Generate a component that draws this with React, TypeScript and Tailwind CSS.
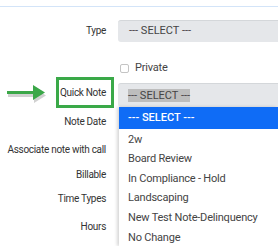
const options = [
  '--- SELECT ---',
  '2w',
  'Board Review',
  'In Compliance - Hold',
  'Landscaping',
  'New Test Note-Delinquency',
  'No Change',
]

function Label({ text, className = '' }: { text: string; className?: string }) {
  return (
    <div
      className={`w-[106px] shrink-0 whitespace-nowrap text-right text-[10px] leading-[14px] tracking-[-0.3px] text-[#333] ${className}`}
    >
      {text}
    </div>
  )
}

export default function App() {
  return (
    <div
      className="relative h-[246px] w-[278px] overflow-hidden bg-white"
      style={{ fontFamily: 'Roboto, "Noto Sans", sans-serif' }}
    >
      <div className="mt-[6px] h-px w-full bg-[#d3e4f8]" />

      {/* Type */}
      <div className="mt-[13px] flex h-[22px] items-center">
        <Label text="Type" />
        <div className="ml-3 flex h-[22px] flex-1 items-center rounded-l-[3px] border-t border-[#d4d7da] bg-[#e5e7ea] pl-[11px] text-[11px] text-[#444]">
          --- SELECT ---
        </div>
      </div>

      {/* Private */}
      <div className="mt-[19px] flex h-[14px] items-center">
        <div className="w-[120px] shrink-0" />
        <span className="h-[9px] w-[9px] rounded-[2px] border border-[#c4c4c4] bg-white" />
        <span className="ml-[6px] text-[11px] tracking-[-0.2px] text-[#444]">Private</span>
      </div>

      {/* Quick Note */}
      <div className="relative mt-[2px] flex h-[31px] items-center">
        <svg className="absolute left-[7px] top-[8px]" width="40" height="18" viewBox="0 0 40 18">
          <path d="M1 9h26V3l12 7.5-12 7.5v-6H1z" fill="#000" opacity="0.18" />
          <path d="M0 6h26V0l12 7.5L26 15V9H0z" fill="#3ba748" />
        </svg>
        <div className="ml-[56px] flex h-[31px] w-[58px] shrink-0 items-center justify-end border-[3px] border-[#3aa948] pr-[5px] whitespace-nowrap text-[10px] tracking-[-0.3px] text-[#333]">
          Quick Note
        </div>
        <div className="mb-[1px] ml-[4px] flex h-[24px] flex-1 items-center self-end rounded-l-[3px] border-t border-[#d4d7da] bg-[#e5e7ea] pl-[10px] text-[11px] text-[#444]">
          <span className="bg-[#bdbdbd] leading-[13px]">--- SELECT ---</span>
        </div>
      </div>

      <div className="mt-[7px] flex flex-col">
        <Label text="Note Date" />
        <Label text="Associate note with call" className="mt-[14px]" />
        <Label text="Billable" className="mt-[11px]" />
        <Label text="Time Types" className="mt-[10px]" />
        <Label text="Hours" className="mt-[14px]" />
      </div>

      {/* open dropdown */}
      <ul className="absolute bottom-0 left-[119px] right-0 top-[107px] bg-white shadow-[-2px_0_3px_rgba(0,0,0,0.16)]">
        {options.map((o, i) => (
          <li
            key={o}
            className={
              i === 0
                ? 'flex h-[22px] items-center whitespace-nowrap bg-[#0f6cf6] pl-[9px] text-[11px] font-medium text-white'
                : 'flex h-[19.6px] items-center whitespace-nowrap pl-[9px] pt-[2px] text-[11px] tracking-[-0.2px] text-[#444]'
            }
          >
            {o}
          </li>
        ))}
      </ul>
    </div>
  )
}
